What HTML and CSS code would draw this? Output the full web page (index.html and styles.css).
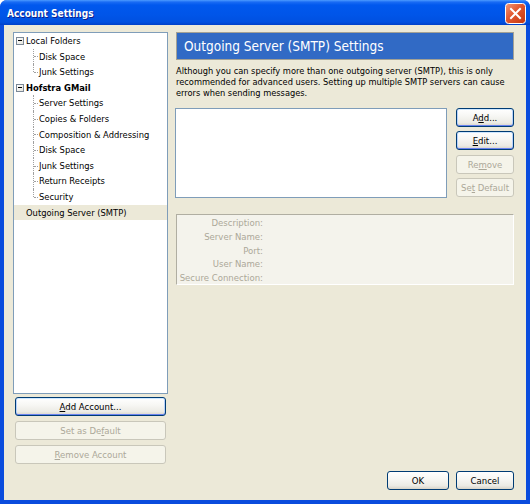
FILE: index.html
```html
<!DOCTYPE html>
<html>
<head>
<meta charset="utf-8">
<title>Account Settings</title>
<link rel="stylesheet" href="styles.css">
</head>
<body>
<div class="window">
  <div class="titlebar">
    <span class="title">Account Settings</span>
    <span class="close">
      <svg width="21" height="21" viewBox="0 0 21 21">
        <defs>
          <linearGradient id="cg" x1="0" y1="0" x2="1" y2="1">
            <stop offset="0" stop-color="#F09A7C"/>
            <stop offset="0.45" stop-color="#E2572F"/>
            <stop offset="1" stop-color="#C1360F"/>
          </linearGradient>
        </defs>
        <rect x="0.5" y="0.5" width="20" height="20" rx="3" fill="url(#cg)" stroke="#ffffff"/>
        <path d="M6 6 L15 15 M15 6 L6 15" stroke="#ffffff" stroke-width="2" stroke-linecap="square"/>
      </svg>
    </span>
  </div>
  <div class="client">
    <div class="main">
      <div class="leftcol">
        <div class="tree">
          <div class="row top"><span class="expander"></span>Local Folders</div>
          <div class="row child">Disk Space</div>
          <div class="row child last">Junk Settings</div>
          <div class="row top bold"><span class="expander"></span>Hofstra GMail</div>
          <div class="row child">Server Settings</div>
          <div class="row child">Copies &amp; Folders</div>
          <div class="row child">Composition &amp; Addressing</div>
          <div class="row child">Disk Space</div>
          <div class="row child">Junk Settings</div>
          <div class="row child">Return Receipts</div>
          <div class="row child last">Security</div>
          <div class="row plain selected">Outgoing Server (SMTP)</div>
        </div>
        <div class="acct-buttons">
          <button class="btn focus"><u>A</u>dd Account...</button>
          <button class="btn disabled">Set as De<u>f</u>ault</button>
          <button class="btn disabled"><u>R</u>emove Account</button>
        </div>
      </div>
      <div class="rightcol">
        <div class="header">Outgoing Server (SMTP) Settings</div>
        <p class="desc">Although you can specify more than one outgoing server (SMTP), this is only<br>recommended for advanced users. Setting up multiple SMTP servers can cause<br>errors when sending messages.</p>
        <div class="server-row">
          <div class="listbox"></div>
          <div class="side-buttons">
            <button class="btn focus">A<u>d</u>d...</button>
            <button class="btn focus"><u>E</u>dit...</button>
            <button class="btn disabled">Re<u>m</u>ove</button>
            <button class="btn disabled">Se<u>t</u> Default</button>
          </div>
        </div>
        <div class="details">
          <div class="drow"><span class="dlabel">Description:</span><span class="dval"></span></div>
          <div class="drow"><span class="dlabel">Server Name:</span><span class="dval"></span></div>
          <div class="drow"><span class="dlabel">Port:</span><span class="dval"></span></div>
          <div class="drow"><span class="dlabel">User Name:</span><span class="dval"></span></div>
          <div class="drow"><span class="dlabel">Secure Connection:</span><span class="dval"></span></div>
        </div>
      </div>
    </div>
    <div class="footer">
      <button class="btn wide">OK</button>
      <button class="btn wide">Cancel</button>
    </div>
  </div>
</div>
</body>
</html>
```

FILE: styles.css
```css
* { box-sizing: border-box; }
html, body { margin: 0; padding: 0; }
body {
  width: 530px;
  height: 504px;
  overflow: hidden;
  font-family: "DejaVu Sans Condensed", "DejaVu Sans", "Liberation Sans", sans-serif;
  font-stretch: condensed;
  font-size: 9.5px;
  color: #000;
}
.window {
  width: 530px;
  height: 504px;
  display: flex;
  flex-direction: column;
  background: #0A4CDD;
  border-radius: 7px 7px 0 0;
  overflow: hidden;
}
.titlebar {
  height: 25px;
  flex: none;
  display: flex;
  align-items: center;
  justify-content: space-between;
  padding: 0 4px 0 7px;
  background: linear-gradient(#4C9BFF 0%, #1A6CF4 8%, #0058EE 20%, #0055E8 60%, #0050E0 88%, #0040C8 100%);
}
.title {
  color: #fff;
  font-weight: bold;
  font-size: 10px;
  font-stretch: normal;
  text-shadow: 1px 1px 0 #0A1E8C;
  padding-top: 1px;
}
.close { display: flex; margin-top: 1px; }
.client {
  flex: 1;
  display: flex;
  flex-direction: column;
  margin: 0 4px 4px 4px;
  background: #ECE9D8;
  padding-top: 7px;
}
.main {
  display: flex;
  gap: 8px;
  padding: 0 12px 0 9px;
}
.leftcol {
  width: 155px;
  flex: none;
  display: flex;
  flex-direction: column;
}
.tree {
  height: 362px;
  background: #fff;
  border: 1px solid #7F9DB9;
  font-size: 9.3px;
}
.row {
  height: 15.6px;
  line-height: 15.6px;
  display: flex;
  align-items: center;
  white-space: nowrap;
  position: relative;
}
.row.top { padding-left: 2px; }
.row.bold { font-weight: bold; }
.row.plain { padding-left: 12px; }
.row.selected { background: #ECE9D8; }
.expander {
  width: 8px;
  height: 8px;
  border: 1px solid #7B8896;
  background: linear-gradient(135deg, #fff, #E5E4DC);
  margin-right: 2px;
  position: relative;
  flex: none;
}
.expander::after {
  content: "";
  position: absolute;
  left: 1px;
  right: 1px;
  top: 2.5px;
  height: 1px;
  background: #000;
}
.row.child { padding-left: 25px; }
.row.child::before {
  content: "";
  position: absolute;
  left: 19px;
  top: 0;
  bottom: 0;
  border-left: 1px dotted #A0A0A0;
}
.row.child.last::before { bottom: 50%; }
.row.child::after {
  content: "";
  position: absolute;
  left: 20px;
  width: 4px;
  top: 50%;
  border-top: 1px dotted #A0A0A0;
}
.acct-buttons {
  display: flex;
  flex-direction: column;
  gap: 5px;
  padding: 3px 2px 0 2px;
}
.btn {
  height: 19px;
  padding: 0;
  border: 1px solid #003C74;
  border-radius: 3px;
  background: linear-gradient(#FFFFFF 0%, #F7F7F4 40%, #ECEBE5 80%, #D8D4C9 100%);
  font-family: inherit;
  font-stretch: condensed;
  font-size: 9.5px;
  color: #000;
  text-align: center;
}
.btn u { text-decoration: underline; }
.btn.focus {
  box-shadow: inset 0 1px 0 #CEE7FF, inset 0 -1px 0 #6982EE, inset 1px 0 0 #B8D2FB, inset -1px 0 0 #B8D2FB;
}
.btn.disabled {
  border-color: #C9C7BA;
  background: #F5F4EA;
  color: #ACA899;
  box-shadow: none;
}
.rightcol {
  width: 338px;
  flex: none;
  display: flex;
  flex-direction: column;
}
.header {
  height: 28px;
  background: #316AC5;
  border: 1px solid #A3A195;
  color: #fff;
  font-size: 13.5px;
  font-stretch: normal;
  display: flex;
  align-items: center;
  padding-left: 7px;
}
.desc {
  margin: 5px 0 0 0;
  font-size: 9.2px;
  line-height: 11px;
  white-space: nowrap;
}
.server-row {
  display: flex;
  gap: 9px;
  margin-top: 10px;
  margin-left: -1px;
}
.listbox {
  width: 272px;
  height: 90px;
  background: #fff;
  border: 1px solid #7F9DB9;
}
.side-buttons {
  flex: 1;
  display: flex;
  flex-direction: column;
  gap: 4.3px;
}
.details {
  margin-top: 16px;
  height: 71px;
  background: #F4F3EC;
  border: 1px solid;
  border-color: #B0AEA2 #FFFFFF #FFFFFF #B0AEA2;
  padding-top: 1px;
}
.drow {
  display: flex;
  height: 13.75px;
  line-height: 13.75px;
}
.dlabel {
  width: 86px;
  text-align: right;
  color: #ACA899;
  white-space: nowrap;
}
.footer {
  margin-top: auto;
  display: flex;
  justify-content: flex-end;
  gap: 7px;
  padding: 0 12px 10px 0;
}
.btn.wide { width: 58px; }
.footer .btn:first-child { width: 62px; }
```
